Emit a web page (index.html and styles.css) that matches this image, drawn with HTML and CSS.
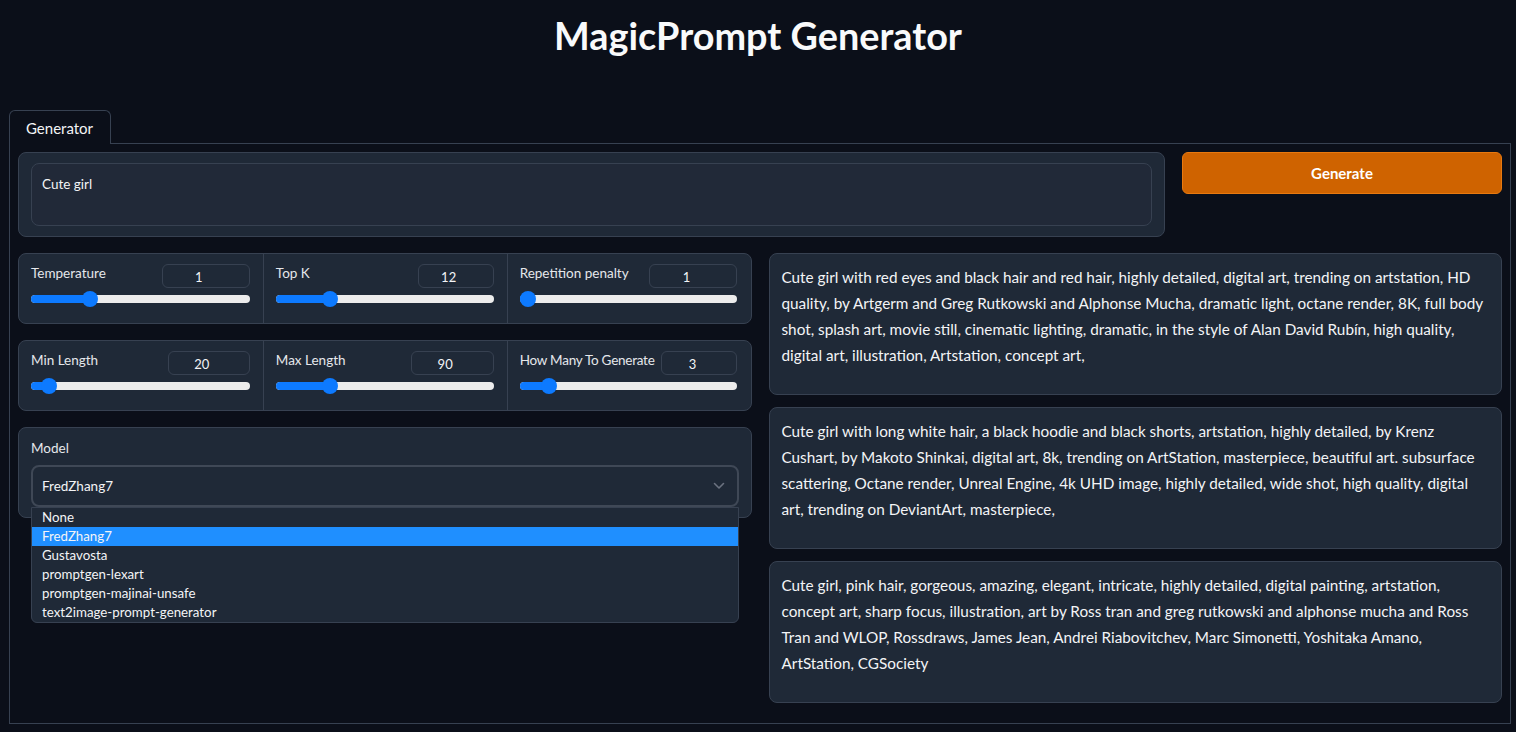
FILE: index.html
```html
<!DOCTYPE html>
<html>
<head>
<meta charset="utf-8">
<title>MagicPrompt Generator</title>
<link rel="stylesheet" href="styles.css">
</head>
<body>
<header class="header"><h1 class="title">MagicPrompt Generator</h1></header>
<div class="tabs">
  <div class="tabnav"><div class="tab">Generator</div></div>
  <div class="panel">
    <div class="row-top">
      <div class="block textbox-block"><div class="textarea">Cute girl</div></div>
      <button class="btn-primary">Generate</button>
    </div>
    <div class="row-main">
      <div class="col">
        <div class="slider-row">
          <div class="slider">
            <div class="slider-head"><span class="label">Temperature</span><span class="num w88">1</span></div>
            <div class="track" style="--p:0.25"><div class="fill"></div><div class="thumb"></div></div>
          </div>
          <div class="slider">
            <div class="slider-head"><span class="label">Top K</span><span class="num w76">12</span></div>
            <div class="track" style="--p:0.227"><div class="fill"></div><div class="thumb"></div></div>
          </div>
          <div class="slider">
            <div class="slider-head"><span class="label">Repetition penalty</span><span class="num w88">1</span></div>
            <div class="track" style="--p:0"><div class="fill"></div><div class="thumb"></div></div>
          </div>
        </div>
        <div class="slider-row">
          <div class="slider">
            <div class="slider-head"><span class="label">Min Length</span><span class="num w82">20</span></div>
            <div class="track" style="--p:0.05"><div class="fill"></div><div class="thumb"></div></div>
          </div>
          <div class="slider">
            <div class="slider-head"><span class="label">Max Length</span><span class="num w83">90</span></div>
            <div class="track" style="--p:0.227"><div class="fill"></div><div class="thumb"></div></div>
          </div>
          <div class="slider">
            <div class="slider-head"><span class="label label-tight">How Many To Generate</span><span class="num w76">3</span></div>
            <div class="track" style="--p:0.104"><div class="fill"></div><div class="thumb"></div></div>
          </div>
        </div>
        <div class="block model-block">
          <div class="label">Model</div>
          <div class="select-wrap">
            <div class="select"><span>FredZhang7</span>
              <svg class="chev" width="12" height="8" viewBox="0 0 12 8"><path d="M1.5 1.5 L6 6 L10.5 1.5" fill="none" stroke="#6b7280" stroke-width="1.6" stroke-linecap="round" stroke-linejoin="round"/></svg>
            </div>
            <ul class="options">
              <li>None</li>
              <li class="selected">FredZhang7</li>
              <li>Gustavosta</li>
              <li>promptgen-lexart</li>
              <li>promptgen-majinai-unsafe</li>
              <li>text2image-prompt-generator</li>
            </ul>
          </div>
        </div>
      </div>
      <div class="col outputs">
        <div class="block output">Cute girl with red eyes and black hair and red hair, highly detailed, digital art, trending on artstation, HD quality, by Artgerm and Greg Rutkowski and Alphonse Mucha, dramatic light, octane render, 8K, full body shot, splash art, movie still, cinematic lighting, dramatic, in the style of Alan David Rubín, high quality, digital art, illustration, Artstation, concept art,</div>
        <div class="block output">Cute girl with long white hair, a black hoodie and black shorts, artstation, highly detailed, by Krenz Cushart, by Makoto Shinkai, digital art, 8k, trending on ArtStation, masterpiece, beautiful art. subsurface scattering, Octane render, Unreal Engine, 4k UHD image, highly detailed, wide shot, high quality, digital art, trending on DeviantArt, masterpiece,</div>
        <div class="block output">Cute girl, pink hair, gorgeous, amazing, elegant, intricate, highly detailed, digital painting, artstation, concept art, sharp focus, illustration, art by Ross tran and greg rutkowski and alphonse mucha and Ross Tran and WLOP, Rossdraws, James Jean, Andrei Riabovitchev, Marc Simonetti, Yoshitaka Amano, ArtStation, CGSociety</div>
      </div>
    </div>
  </div>
</div>
</body>
</html>
```
FILE: styles.css
```css
* { box-sizing: border-box; }
body {
  margin: 0;
  background: #0b0f19;
  color: #f3f4f6;
  font-family: Lato, "Noto Sans", sans-serif;
}
.header {
  height: 110px;
  padding-top: 14px;
}
.title {
  margin: 0;
  text-align: center;
  font-size: 37.8px;
  line-height: 44px;
  font-weight: 700;
  color: #f9fafb;
}
.tabs {
  margin: 0 5px 0 9px;
}
.tabnav {
  display: flex;
  height: 33px;
}
.tab {
  width: 102px;
  height: 34px;
  border: 1px solid #374151;
  border-bottom: none;
  border-radius: 6px 6px 0 0;
  background: #0b0f19;
  font-size: 15px;
  padding: 0 0 0 16px;
  line-height: 34px;
  position: relative;
  z-index: 1;
}
.panel {
  border: 1px solid #374151;
  height: 581px;
  padding: 8px;
  display: flex;
  flex-direction: column;
  gap: 16px;
}
.block {
  background: #1f2937;
  border: 1px solid #374151;
  border-radius: 8px;
}
.row-top {
  display: flex;
  gap: 17px;
  align-items: flex-start;
}
.textbox-block {
  flex: 1;
  height: 85px;
  padding: 10px 12px;
}
.textarea {
  height: 63px;
  border: 1px solid #374151;
  border-radius: 8px;
  padding: 11px 10px;
  font-size: 13.5px;
  line-height: 18px;
  background: #212938;
}
.btn-primary {
  width: 320px;
  height: 42px;
  border: 1px solid #e8790f;
  border-radius: 6px;
  background: #cf6300;
  color: #ffffff;
  font-family: inherit;
  font-size: 15px;
  font-weight: 700;
}
.row-main {
  display: flex;
  gap: 17px;
}
.col {
  flex: 1;
  display: flex;
  flex-direction: column;
  gap: 16px;
}
.outputs { gap: 12px; }
.slider-row {
  display: grid;
  grid-template-columns: 1fr 1fr 1fr;
  height: 71px;
  background: #1f2937;
  border: 1px solid #374151;
  border-radius: 8px;
}
.slider {
  padding: 10px 13px 0 12px;
}
.slider + .slider { border-left: 1px solid #374151; }
.slider-head {
  display: flex;
  justify-content: space-between;
  align-items: flex-start;
  height: 24px;
}
.label {
  font-size: 13.5px;
  line-height: 18px;
  color: #e5e7eb;
  white-space: nowrap;
}
.label-tight { letter-spacing: -0.25px; }
.num {
  height: 24px;
  border: 1px solid #374151;
  border-radius: 6px;
  text-align: center;
  padding-right: 14px;
  font-size: 13px;
  line-height: 24px;
  color: #f3f4f6;
}
.w88 { width: 88px; }
.w76 { width: 76px; }
.w82 { width: 82px; }
.w83 { width: 83px; }
.track {
  position: relative;
  margin-top: 7px;
  height: 8px;
  border-radius: 4px;
  background: #ececec;
}
.fill {
  height: 100%;
  border-radius: 4px;
  background: #0d7aff;
  width: calc(8px + var(--p) * (100% - 16px));
}
.thumb {
  position: absolute;
  top: 50%;
  left: calc(8px + var(--p) * (100% - 16px));
  width: 16px;
  height: 16px;
  border-radius: 50%;
  background: #0d7aff;
  transform: translate(-50%, -50%);
}
.model-block {
  height: 91px;
  padding: 10px 12px;
}
.model-block .label {
  line-height: 20px;
  margin-bottom: 7px;
}
.select-wrap { position: relative; }
.select {
  height: 42px;
  border: 2px solid #3f4856;
  border-radius: 8px;
  display: flex;
  align-items: center;
  justify-content: space-between;
  padding: 0 12px 0 9px;
  font-size: 13.5px;
}
.options {
  position: absolute;
  left: 0;
  right: 0;
  top: 42px;
  margin: 0;
  padding: 0;
  list-style: none;
  background: #1f2937;
  border: 1px solid #374151;
  border-radius: 0 0 6px 6px;
  z-index: 2;
}
.options li {
  height: 19px;
  line-height: 19px;
  padding-left: 10px;
  font-size: 13.3px;
  color: #f3f4f6;
}
.options li.selected { background: #1f8fff; }
.output {
  height: 142px;
  padding: 10px 12px;
  font-size: 15.3px;
  line-height: 26px;
}
```
